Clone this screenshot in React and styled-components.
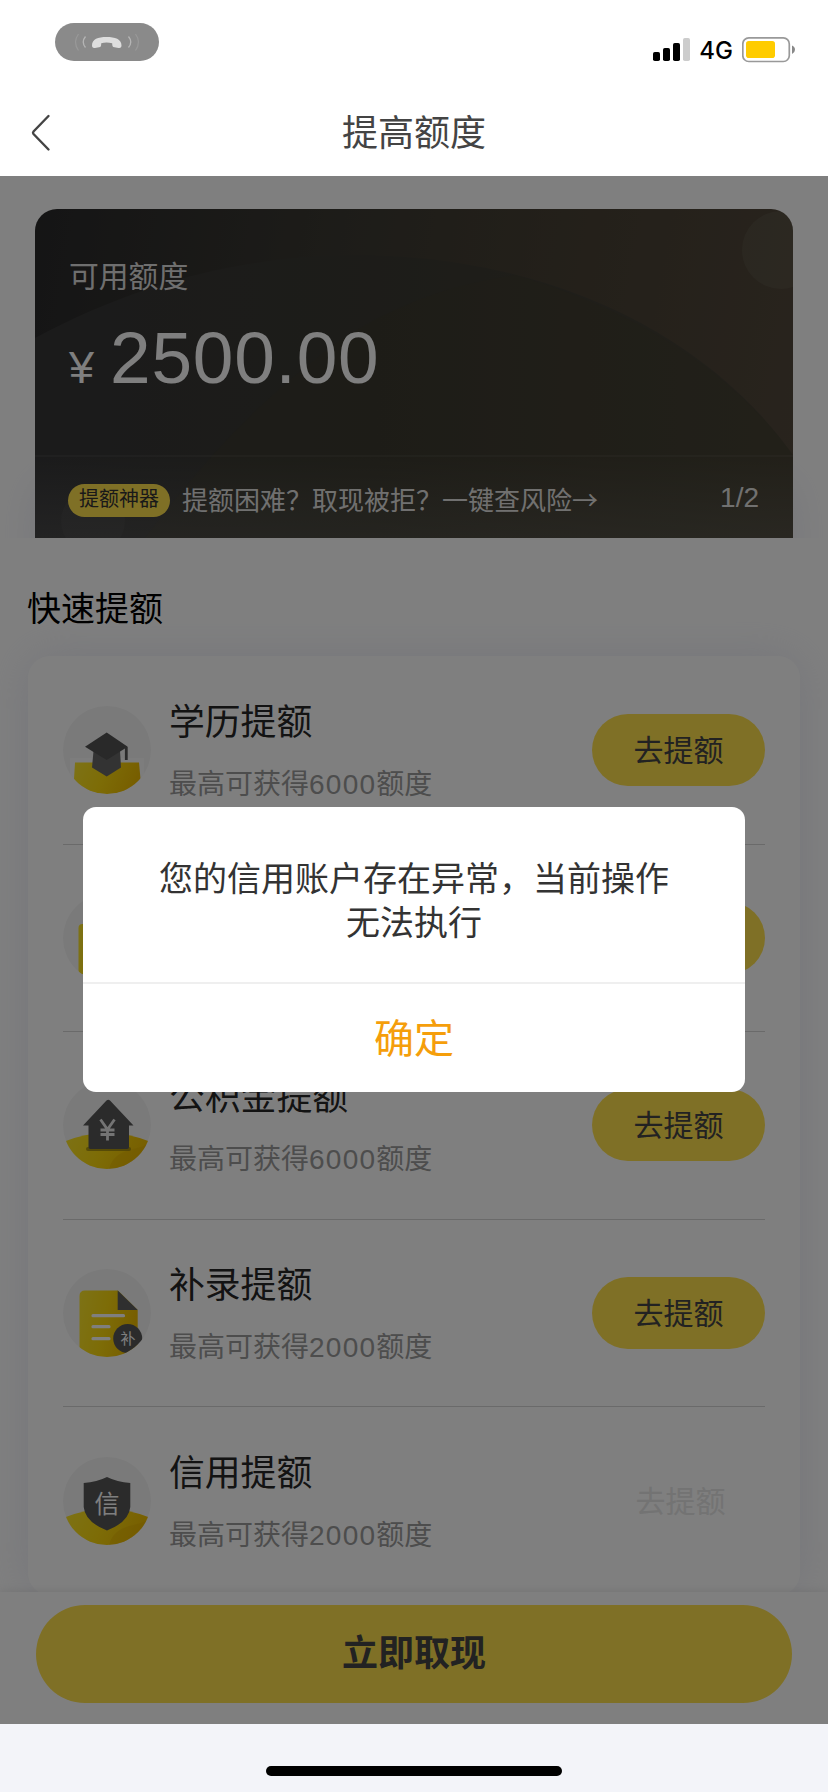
import React from 'react';
import styled, { createGlobalStyle } from 'styled-components';

const GlobalStyle = createGlobalStyle`
  * {
    box-sizing: border-box;
  }

  body {
    margin: 0;
    background: #f3f4f9;
    font-family: 'Liberation Sans', 'Noto Sans CJK SC', sans-serif;
  }

  button {
    border: none;
    padding: 0;
    font-family: inherit;
  }
`;

const Screen = styled.div`
  display: flex;
  flex-direction: column;
  width: 828px;
  height: 1792px;
  overflow: hidden;
  background: #fff;
`;

const StatusBar = styled.div`
  display: flex;
  justify-content: space-between;
  height: 88px;
  padding: 23px 32px 0 55px;
`;

const CallPill = styled.div`
  width: 104px;
  height: 38px;
  border-radius: 19px;
  background: #8a8a8a;
`;

const StatusRight = styled.div`
  display: flex;
  align-items: center;
  height: 30px;
  margin-top: 12px;
`;

const Network = styled.span`
  margin: 2px 9px 0 8px;
  font-family: Inter, sans-serif;
  font-size: 24px;
  font-weight: 500;
  line-height: 30px;
  color: #000;
`;

const NavBar = styled.div`
  display: grid;
  grid-template-columns: 100px 1fr 100px;
  align-items: center;
  height: 88px;
  padding: 1px 30px 0;
`;

const NavTitle = styled.h1`
  margin: 0;
  padding-top: 2px;
  font-size: 36px;
  font-weight: 400;
  line-height: 84px;
  text-align: center;
  color: #444;
`;

const Body = styled.main`
  position: relative;
  display: flex;
  flex-direction: column;
  height: 1548px;
  overflow: hidden;
`;

const Scroll = styled.div`
  flex: 1;
  overflow: hidden;
`;

const Hero = styled.div`
  height: 362px;
  padding: 33px 35px 0;
  overflow: hidden;
`;

const QuotaCard = styled.section`
  position: relative;
  height: 329px;
  border-radius: 22px 22px 0 0;
  overflow: hidden;
  background: linear-gradient(100deg, #2a2a2b 0%, #3b3932 38%, #474034 65%, #52483b 100%);
  box-shadow: 0 270px 40px rgba(200, 204, 230, 0.35);
  color: #fff;
`;

const CardArt = styled.svg`
  position: absolute;
  top: 0;
  left: 0;
`;

const CardTop = styled.div`
  position: relative;
  height: 248px;
  padding: 45px 34px 0;
  border-bottom: 2px solid rgba(255, 255, 255, 0.05);
`;

const QuotaLabel = styled.div`
  font-size: 29.8px;
  line-height: 46px;
  color: rgba(255, 255, 255, 0.86);
`;

const Amount = styled.div`
  display: flex;
  align-items: baseline;
  margin-top: 16px;
  font-size: 73px;
  line-height: 84px;
  letter-spacing: 0.8px;
`;

const Currency = styled.span`
  width: 41px;
  font-size: 45px;
  letter-spacing: 0;
`;

const Notice = styled.div`
  position: relative;
  display: flex;
  align-items: center;
  height: 81px;
  padding: 5px 34px 0 33px;
`;

const Tag = styled.span`
  width: 102px;
  height: 33px;
  margin-right: 12px;
  border-radius: 17px;
  background: #ffe04d;
  font-size: 20px;
  line-height: 31px;
  text-align: center;
  color: #333;
`;

const NoticeText = styled.span`
  flex: 1;
  margin-bottom: 2px;
  font-family: 'Noto Sans CJK SC', sans-serif;
  font-size: 26px;
  line-height: 36px;
  color: rgba(255, 255, 255, 0.86);
`;

const Page = styled.span`
  margin-bottom: 4px;
  font-size: 28px;
  line-height: 36px;
  color: rgba(255, 255, 255, 0.86);
`;

const SectionTitle = styled.h2`
  margin: 45px 0 0 27px;
  font-size: 34px;
  font-weight: 400;
  line-height: 52px;
  color: #000;
`;

const List = styled.ul`
  margin: 21px 28px 0;
  padding: 1px 35px 0;
  border-radius: 22px;
  list-style: none;
  background: #fff;
  box-shadow: 0 0 44px rgba(196, 199, 226, 0.36);
`;

const Row = styled.li`
  display: flex;
  align-items: center;
  height: 187.6px;
  border-bottom: ${(props) => (props.$last ? 'none' : '1px solid #d4d4d4')};
`;

const RowText = styled.div`
  flex: 1;
  margin-left: 18px;
  padding-top: 4px;
`;

const RowTitle = styled.div`
  font-size: 35.8px;
  line-height: 54px;
  color: #262626;
`;

const RowDesc = styled.div`
  margin-top: 11px;
  font-size: 28px;
  line-height: 48px;
  color: #9a9a9a;
`;

const Digits = styled.span`
  letter-spacing: 1.25px;
`;

const RaiseButton = styled.button`
  width: 173px;
  height: 72px;
  padding-left: ${(props) => (props.$disabled ? '4px' : '0')};
  padding-bottom: 5px;
  border-radius: 36px;
  background: ${(props) => (props.$disabled ? 'transparent' : '#ffe04d')};
  font-size: 30px;
  color: ${(props) => (props.$disabled ? '#e6e6e6' : '#444')};
`;

const Footer = styled.footer`
  position: relative;
  height: 132px;
  padding: 13px 36px 0;
  background: #fff;
  box-shadow: 0 0 10px rgba(0, 0, 0, 0.1);
`;

const WithdrawButton = styled.button`
  width: 100%;
  height: 98px;
  padding-bottom: 9px;
  border-radius: 49px;
  background: #ffe04d;
  font-size: 36px;
  font-weight: 700;
  color: #444;
`;

const Overlay = styled.div`
  position: absolute;
  inset: 0;
  display: flex;
  justify-content: center;
  align-items: flex-start;
  padding-top: 631px;
  background: rgba(0, 0, 0, 0.5);
`;

const Dialog = styled.div`
  width: 662px;
  height: 285px;
  border-radius: 13px;
  overflow: hidden;
  background: #fff;
`;

const DialogText = styled.p`
  height: 177px;
  margin: 0;
  padding: 50px 70px 0;
  border-bottom: 2px solid #efefef;
  font-size: 34px;
  line-height: 44px;
  text-align: center;
  color: #333;
`;

const DialogButton = styled.button`
  width: 100%;
  height: 108px;
  padding-bottom: 5px;
  background: transparent;
  font-size: 40px;
  color: #f59e0b;
`;

const HomeArea = styled.div`
  display: flex;
  justify-content: center;
  flex: 1;
  padding-top: 42px;
  background: #f3f4f9;
`;

const HomeIndicator = styled.div`
  width: 296px;
  height: 10px;
  border-radius: 5px;
  background: #000;
`;

const CallIcon = () => (
  <svg width="104" height="38" viewBox="0 0 104 38" fill="none">
    <path d="M37 22.500C37 16 43 14 51.500 14S66.500 16 66.500 22.500C66.500 24.500 65.500 25.200 63.500 24.900L59.500 24.300C57.500 24 57.200 23 57.200 20.200Q51.500 18.600 46.200 20.200C46.200 23 46 24 44 24.300L40 24.900C38 25.200 37 24.500 37 22.500Z" fill="#dedede" />
    <path d="M30.500 13.500Q26 19 30.500 24.500M73.500 13.500Q78 19 73.500 24.500" stroke="#b5b5b5" strokeWidth="1.300" />
    <path d="M23.500 11Q17.500 19 23.500 27.500M80.500 11Q86.500 19 80.500 27.500" stroke="#999" strokeWidth="1.200" />
  </svg>
);

const SignalIcon = () => (
  <svg width="38" height="24" viewBox="0 0 38 24">
    <rect x="0" y="14" width="7" height="9" rx="1.800" />
    <rect x="10" y="10" width="7" height="13" rx="1.800" />
    <rect x="20" y="5" width="7" height="18" rx="1.800" />
    <rect x="30" y="0" width="7" height="23" rx="1.800" fill="#ccc" />
  </svg>
);

const BatteryIcon = () => (
  <svg width="54" height="26" viewBox="0 0 54 26">
    <rect x="0.800" y="0.900" width="46.500" height="23.600" rx="6" fill="none" stroke="#999" strokeWidth="1.700" />
    <rect x="4" y="4" width="29" height="17" rx="2.800" fill="#ffcc00" />
    <path d="M50 8.500Q53 9.800 53 12.700T50 17Z" fill="#888" />
  </svg>
);

const BackIcon = () => (
  <svg width="22" height="38" viewBox="0 0 22 38" fill="none" stroke="#444" strokeWidth="2.400" strokeLinecap="round" strokeLinejoin="round">
    <path d="M18.500 2L3.500 17.500Q2.500 18.700 3.500 20L18.500 35.500" />
  </svg>
);

const Yen = ({ x, y }) => (
  <path
    transform={`translate(${x} ${y})`}
    d="M0 0.500L7 10.500L14 0.500M7 10.500V21.500M0 11H14M0 15.500H14"
    fill="none"
    stroke="#e8e8e8"
    strokeWidth="2.800"
  />
);

// round badge shared by every row, art is clipped to the circle
const Badge = ({ id, children }) => (
  <svg width="88" height="88" viewBox="0 0 88 88">
    <defs>
      <clipPath id={`clip-${id}`}>
        <circle cx="44" cy="44" r="44" />
      </clipPath>
      <linearGradient id="gold" x1="0" y1="0" x2="1" y2="0.200">
        <stop offset="0" stopColor="#fbe52c" />
        <stop offset="0.500" stopColor="#fbd90e" />
        <stop offset="1" stopColor="#efbd00" />
      </linearGradient>
    </defs>
    <circle cx="44" cy="44" r="44" fill="#f5f5f5" />
    <g clipPath={`url(#clip-${id})`}>{children}</g>
  </svg>
);

const Hill = () => (
  <>
    <path d="M0 61Q44 43 88 61V88H0Z" fill="url(#gold)" />
    <path d="M46 88Q50 72 70 68T88 56V88Z" fill="#e0ac00" opacity="0.350" />
  </>
);

const DegreeIcon = () => (
  <Badge id="degree">
    <path d="M7 52H81V76H7Z" fill="#fff" opacity="0.500" />
    <path d="M12 56.500H76L77.500 73Q66 88 44 88T11 73Z" fill="url(#gold)" />
    <path d="M30.500 45H57L58 61.500L43.700 70.500L29 61.500Z" fill="#666" />
    <path d="M43.700 26.500L64.700 40.700L43.700 54L22 40.700Z" fill="#525252" />
    <path d="M63.300 41V54" stroke="#565656" strokeWidth="2.800" />
  </Badge>
);

const WorkIcon = () => (
  <Badge id="work">
    <rect x="15.500" y="30" width="57" height="50" rx="4" fill="url(#gold)" />
  </Badge>
);

const HouseIcon = () => (
  <Badge id="house">
    <Hill />
    <rect x="23" y="66" width="45" height="4" rx="2" fill="#8d7a10" opacity="0.700" />
    <path d="M43.500 19.500Q45.300 18 47 19.500L70.500 44.500H66V66Q66 68 64 68H27.500Q25.500 68 25.500 66V44.500H20Z" fill="#565656" />
    <Yen x={37.500} y={38} />
  </Badge>
);

const SupplementIcon = () => (
  <Badge id="supplement">
    <path d="M16.500 27Q16.500 21.500 22 21.500H55L74.700 41V88H16.500Z" fill="url(#gold)" />
    <path d="M54.700 21.500L74.700 41H54.700Z" fill="#5e5e5e" />
    <path d="M30 46.700H60.500M30 57.700H46M30 69.700H46" stroke="#fff" strokeWidth="3.200" strokeLinecap="round" />
    <circle cx="64.700" cy="69.500" r="14.500" fill="#565656" />
    <text x="65" y="75" fontSize="15" textAnchor="middle" fill="#fff">补</text>
  </Badge>
);

const CreditIcon = () => (
  <Badge id="credit">
    <Hill />
    <path d="M44 20Q54 25 67.300 26V50Q66 65 44 73.500Q22 65 20.700 50V26Q34 25 44 20Z" fill="#565656" />
    <text x="44" y="55.500" fontSize="25" textAnchor="middle" fill="#fff">信</text>
  </Badge>
);

const rows = [
  { id: 'degree', title: '学历提额', amount: '6000', Icon: DegreeIcon },
  { id: 'work', Icon: WorkIcon },
  { id: 'house', title: '公积金提额', amount: '6000', Icon: HouseIcon },
  { id: 'supplement', title: '补录提额', amount: '2000', Icon: SupplementIcon },
  { id: 'credit', title: '信用提额', amount: '2000', Icon: CreditIcon, disabled: true },
];

const App = () => {
  return (
    <>
      <GlobalStyle />
      <Screen>
        <StatusBar>
          <CallPill>
            <CallIcon />
          </CallPill>
          <StatusRight>
            <SignalIcon />
            <Network>4G</Network>
            <BatteryIcon />
          </StatusRight>
        </StatusBar>
        <NavBar>
          <BackIcon />
          <NavTitle>提高额度</NavTitle>
        </NavBar>
        <Body>
          <Scroll>
            <Hero>
              <QuotaCard>
                <CardArt width="758" height="329" viewBox="0 0 758 329">
                  <defs>
                    <linearGradient id="fade" x1="0" y1="0" x2="0" y2="1">
                      <stop offset="0.750" stopColor="#aaa" stopOpacity="0" />
                      <stop offset="1" stopColor="#aaa" stopOpacity="0.140" />
                    </linearGradient>
                    <linearGradient id="arc" x1="0" y1="0" x2="1" y2="0">
                      <stop offset="0" stopColor="#363637" />
                      <stop offset="0.450" stopColor="#3a3932" />
                      <stop offset="1" stopColor="#454136" />
                    </linearGradient>
                  </defs>
                  <path d="M0 129C130 60 250 40 370 48C560 62 690 150 758 246V329H0Z" fill="url(#arc)" />
                  <path d="M110 329C170 250 220 195 300 135Q380 80 480 66C600 100 700 165 758 246V329Z" fill="#4a4320" opacity="0.140" />
                  <circle cx="746" cy="41" r="39" fill="#7d8070" opacity="0.180" />
                  <circle cx="58" cy="312" r="32" fill="#fff" opacity="0.030" />
                  <rect width="758" height="329" fill="url(#fade)" />
                </CardArt>
                <CardTop>
                  <QuotaLabel>可用额度</QuotaLabel>
                  <Amount>
                    <Currency>¥</Currency>2500.00
                  </Amount>
                </CardTop>
                <Notice>
                  <Tag>提额神器</Tag>
                  <NoticeText>提额困难？取现被拒？一键查风险→</NoticeText>
                  <Page>1/2</Page>
                </Notice>
              </QuotaCard>
            </Hero>
            <SectionTitle>快速提额</SectionTitle>
            <List>
              {rows.map(({ id, title, amount, Icon, disabled }, index) => (
                <Row key={id} $last={index === rows.length - 1}>
                  <Icon />
                  <RowText>
                    {title && <RowTitle>{title}</RowTitle>}
                    {amount && (
                      <RowDesc>
                        最高可获得<Digits>{amount}</Digits>额度
                      </RowDesc>
                    )}
                  </RowText>
                  <RaiseButton $disabled={disabled}>{title && '去提额'}</RaiseButton>
                </Row>
              ))}
            </List>
          </Scroll>
          <Footer>
            <WithdrawButton>立即取现</WithdrawButton>
          </Footer>
          <Overlay>
            <Dialog>
              <DialogText>您的信用账户存在异常，当前操作无法执行</DialogText>
              <DialogButton>确定</DialogButton>
            </Dialog>
          </Overlay>
        </Body>
        <HomeArea>
          <HomeIndicator />
        </HomeArea>
      </Screen>
    </>
  );
};

export default App;
